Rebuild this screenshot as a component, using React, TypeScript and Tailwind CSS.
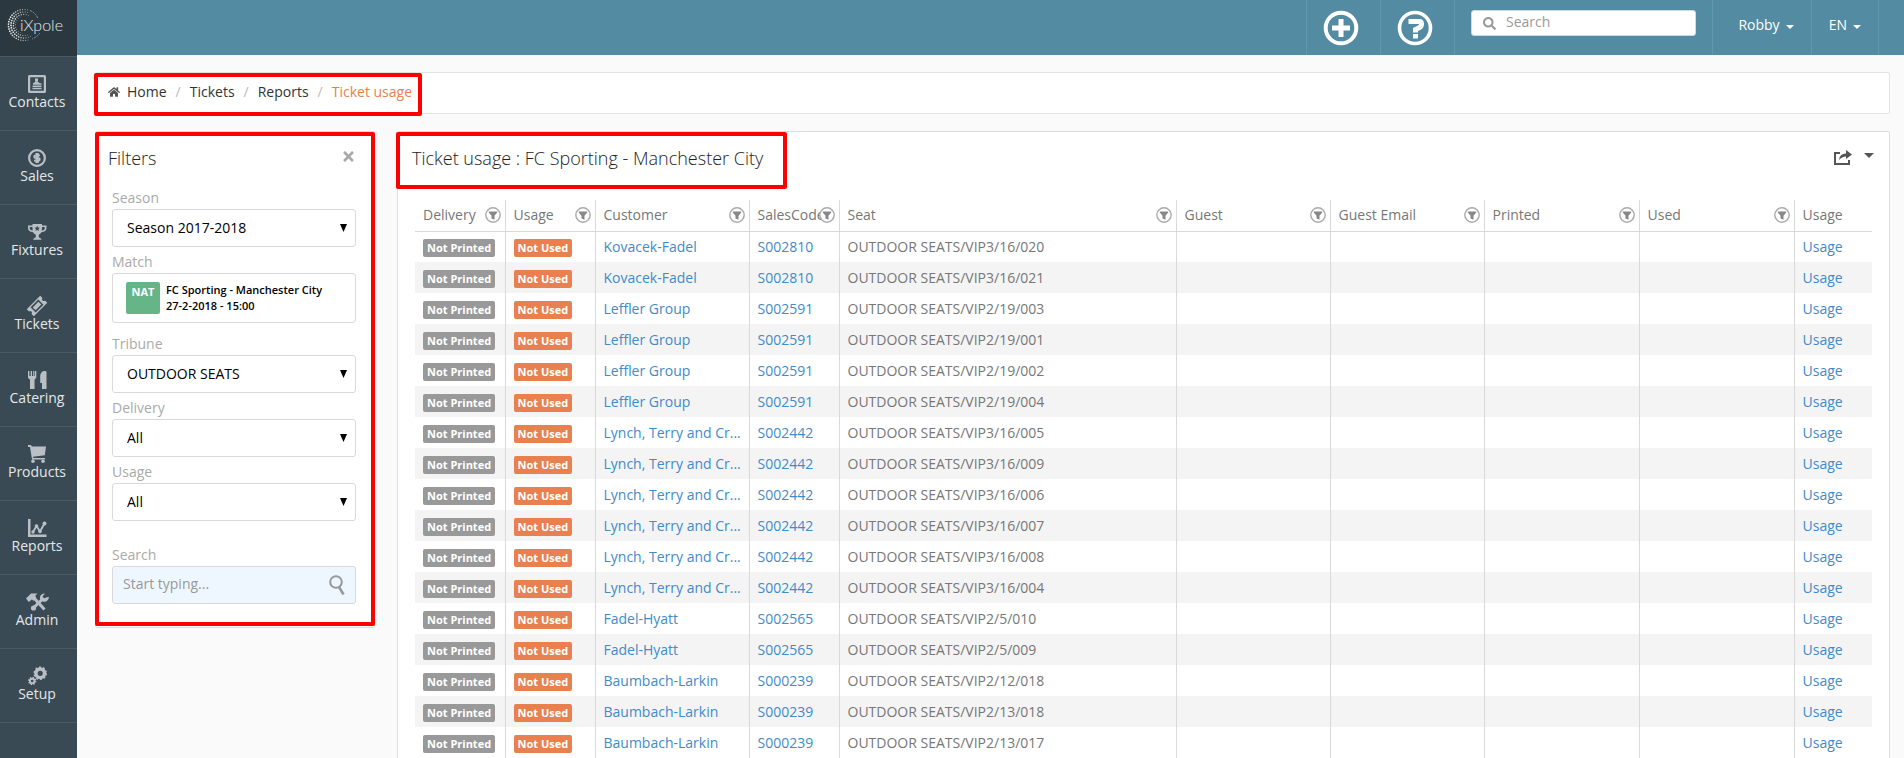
import type { ReactNode } from "react";
import { FaHome, FaSearch, FaTimes } from "react-icons/fa";

const icons: Record<string, ReactNode> = {
  contacts: (
    <>
      <path fillRule="evenodd" d="M1.500 0h15A1.500 1.500 0 0 1 18 1.500v15a1.500 1.500 0 0 1-1.500 1.500h-15A1.500 1.500 0 0 1 0 16.500v-15A1.500 1.500 0 0 1 1.500 0zM2.200 2.200v13.600h13.600V2.200z" />
      <path d="M7 3.500h3v3.300H7zM5 9.700V8.200L7 7h3l2 1.200h1.500v1.500zM4.500 10.500h9V12h-9zM4.500 12.700h9v1.500h-9z" />
    </>
  ),
  sales: (
    <>
      <circle cx="9" cy="9" r="7.900" fill="none" stroke="currentColor" strokeWidth="2.200" />
      <path d="M12 6.300H7.500a1.350 1.350 0 0 0 0 2.700h3a1.350 1.350 0 0 1 0 2.700H6M8.300 4v10M10 4v10" fill="none" stroke="currentColor" strokeWidth="1.700" />
    </>
  ),
  fixtures: (
    <path fillRule="evenodd" d="M4.500 1h9.500v1.500h4.500V5c0 2.500-2 4-5 4.300-.8 1.300-1.700 2-2.700 2.400v2.600l2.500 1.500v1h-8v-1l2.500-1.500v-2.600c-1-.4-2-1.100-2.700-2.400C2 9 0 7.500 0 5V2.500h4.500zM1.700 4v1c0 1.300 1 2.300 2.900 2.700L4.500 4zM16.800 4H14l-.2 3.700C15.800 7.300 16.800 6.300 16.800 5zM9.200 2.800l-.8 1.700-1.900.2 1.400 1.300-.4 1.900L9.200 7l1.700.9-.4-1.900 1.400-1.300-1.900-.2z" />
  ),
  tickets: (
    <g transform="rotate(-45 9 9)">
      <path fillRule="evenodd" d="M-.5 4h19v3.300a1.700 1.700 0 0 0 0 3.400V14h-19v-3.300a1.700 1.700 0 0 0 0-3.400zM3.500 5.400v7.200h11V5.400z" />
      <path d="M5 7h8v4H5z" />
    </g>
  ),
  catering: (
    <path d="M0 0h1.400v5h1.300V0H4v5h1.200V0h1.200v5h.6V0h1.300v6c0 1.300-.8 2-1.800 2.400V18H2V8.400C.8 8 0 7.300 0 6zM18.500 1v17H14v-6h-1.800V5c0-3 2-5 4.300-5 1.200 0 2 .3 2 1z" />
  ),
  products: (
    <>
      <path d="M0 0h3l.8 1.500H18l-1.200 8.700L5 11.700l.4 1.300H17v1.500H4L2 2H0z" />
      <circle cx="5" cy="16.200" r="1.800" />
      <circle cx="15" cy="16.200" r="1.800" />
    </>
  ),
  reports: (
    <>
      <path d="M0 0h2.500v15.500H18.500V18H0z" />
      <path d="M5 13l3.500-6L12 12.500l4.500-8" fill="none" stroke="currentColor" strokeWidth="1.900" />
      <circle cx="5" cy="13" r="1.700" />
      <circle cx="8.500" cy="7" r="1.800" />
      <circle cx="12" cy="12.500" r="1.800" />
      <circle cx="16.500" cy="4.500" r="2" />
    </>
  ),
  admin: (
    <>
      <path d="M-2 5.500L3 .5h6.500L7.200 2.800l1.200 1.900-3 3-1.600-1.200L.8 9z" />
      <path d="M6 5l10.500 11.500" stroke="currentColor" strokeWidth="3" />
      <path d="M5.500 15l9-9" stroke="currentColor" strokeWidth="3" />
      <circle cx="5.500" cy="15" r="2.600" />
      <path d="M17 .5l-2.500 3 1.500 1.700 4.800-1.500c.3 3-2.300 5.300-5.300 5-2.600-.3-4-2.700-3.500-5C12.400 1.700 14.700.2 17 .5z" />
    </>
  ),
  setup: (
    <>
      <circle cx="12.200" cy="6.300" r="4.300" fill="none" stroke="currentColor" strokeWidth="3.400" />
      <circle cx="12.200" cy="6.300" r="6.100" fill="none" stroke="currentColor" strokeWidth="1.400" strokeDasharray="2 1.830" />
      <circle cx="4.200" cy="14" r="2.300" fill="none" stroke="currentColor" strokeWidth="2" />
      <circle cx="4.200" cy="14" r="3.600" fill="none" stroke="currentColor" strokeWidth="1.200" strokeDasharray="1.400 1.430" />
    </>
  ),
};

const nav = [
  ["Contacts", "contacts"],
  ["Sales", "sales"],
  ["Fixtures", "fixtures"],
  ["Tickets", "tickets"],
  ["Catering", "catering"],
  ["Products", "products"],
  ["Reports", "reports"],
  ["Admin", "admin"],
  ["Setup", "setup"],
];

const columns = [
  ["Delivery", "w-[90px]"],
  ["Usage", "w-[90px]"],
  ["Customer", "w-[154px]"],
  ["SalesCode", "w-[90px]"],
  ["Seat", ""],
  ["Guest", "w-[154px]"],
  ["Guest Email", "w-[154px]"],
  ["Printed", "w-[155px]"],
  ["Used", "w-[155px]"],
];

const tickets = [
  ["Kovacek-Fadel", "S002810", "VIP3/16/020"],
  ["Kovacek-Fadel", "S002810", "VIP3/16/021"],
  ["Leffler Group", "S002591", "VIP2/19/003"],
  ["Leffler Group", "S002591", "VIP2/19/001"],
  ["Leffler Group", "S002591", "VIP2/19/002"],
  ["Leffler Group", "S002591", "VIP2/19/004"],
  ["Lynch, Terry and Cr...", "S002442", "VIP3/16/005"],
  ["Lynch, Terry and Cr...", "S002442", "VIP3/16/009"],
  ["Lynch, Terry and Cr...", "S002442", "VIP3/16/006"],
  ["Lynch, Terry and Cr...", "S002442", "VIP3/16/007"],
  ["Lynch, Terry and Cr...", "S002442", "VIP3/16/008"],
  ["Lynch, Terry and Cr...", "S002442", "VIP3/16/004"],
  ["Fadel-Hyatt", "S002565", "VIP2/5/010"],
  ["Fadel-Hyatt", "S002565", "VIP2/5/009"],
  ["Baumbach-Larkin", "S000239", "VIP2/12/018"],
  ["Baumbach-Larkin", "S000239", "VIP2/13/018"],
  ["Baumbach-Larkin", "S000239", "VIP2/13/017"],
];

// rings of the logo: radius, dot size, first and last angle in degrees
const rings = [
  [15.5, 0.9, 75, 300],
  [13, 0.9, 60, 305],
  [10.6, 0.8, 70, 310],
  [8.6, 0.5, 100, 270],
];

export default function App() {
  return (
    <div className="flex h-screen overflow-hidden bg-[#fafafa] font-['Open_Sans',sans-serif] text-sm text-[#777]">
      <Sidebar />
      <div className="flex min-w-0 flex-1 flex-col">
        <TopBar />
        <main className="flex min-h-0 flex-1 flex-col pt-[17px] pr-[14px] pl-[18px]">
          <Breadcrumb />
          <div className="mt-[17px] flex min-h-0 flex-1 items-start gap-[22px]">
            <Filters />
            <TicketUsage />
          </div>
        </main>
      </div>
    </div>
  );
}

/* Red marker frame drawn over a part of the page */
function Marker({ className }: { className: string }) {
  return (
    <div
      aria-hidden="true"
      className={`pointer-events-none absolute rounded-xs border-4 border-[#ff0000] ${className}`}
    />
  );
}

function Sidebar() {
  return (
    <nav className="w-[77px] shrink-0 bg-[#3a4a54]" aria-label="Main">
      <a href="#" aria-label="iXpole" className="block h-14 bg-[#2c3840] pt-[7px] pl-[6px]">
        <Logo />
      </a>
      {nav.map(([label, icon]) => (
        <a
          key={label}
          href="#"
          className="flex h-[74px] flex-col items-center border-t border-[#4b5a64] pt-[18px] pr-[3px] text-[#e4e7e9] last:h-[75px] last:border-b"
        >
          <svg width="18" height="18" viewBox="0 0 18 18" fill="currentColor" className="shrink-0 overflow-visible text-[#b9bfc4]" aria-hidden="true">
            {icons[icon]}
          </svg>
          <span className="leading-[18px]">{label}</span>
        </a>
      ))}
    </nav>
  );
}

function Logo() {
  const dots = rings.flatMap(([radius, size, from, to], ring) => {
    const step = 140 / radius;
    const count = Math.floor((to - from) / step);
    return Array.from({ length: count }, (_, i) => {
      const angle = ((from + i * step) * Math.PI) / 180;
      // dots fade out towards both ends of the crescent
      const edge = Math.sin(((i + 0.5) / count) * Math.PI);
      return (
        <circle
          key={`${ring}-${i}`}
          cx={18 + radius * Math.cos(angle)}
          cy={18 + radius * Math.sin(angle)}
          r={size * (0.6 + 0.4 * edge)}
          opacity={0.5 + 0.5 * edge}
        />
      );
    });
  });

  return (
    <svg width="60" height="36" viewBox="0 0 60 36" fill="#e4e7e9" aria-hidden="true">
      {dots}
      <path d="M24 3.500Q30 6 32 12M34 26Q31 30 26 32" fill="none" stroke="#8d979e" strokeWidth="1" strokeDasharray="2 1" />
      <text x="14" y="24" fontSize="16" fontFamily="Lato" fontWeight="300">
        iXpole
      </text>
    </svg>
  );
}

function TopBar() {
  return (
    <header className="flex h-[55px] shrink-0 justify-end bg-[#528ba2] pr-[25px] text-white">
      <button type="button" aria-label="Add" className="flex w-[74px] items-center justify-center border-l border-[#6397ac] pr-[6px]">
        <svg width="36" height="36" viewBox="0 0 36 36" fill="none" stroke="currentColor" aria-hidden="true">
          <circle cx="18" cy="18" r="15.300" strokeWidth="4" />
          <path d="M18 9v18M9 18h18" strokeWidth="5" />
        </svg>
      </button>
      <button type="button" aria-label="Help" className="flex w-[74px] items-center justify-center border-l border-[#6397ac] pr-[6px]">
        <svg width="36" height="36" viewBox="0 0 36 36" fill="none" stroke="currentColor" aria-hidden="true">
          <circle cx="18" cy="18" r="15.500" strokeWidth="3.600" />
          <path d="M11.500 11.500h11q2 0 2 2.500t-2 3.500l-4 2v3" strokeWidth="5" />
          <path d="M18.500 24v4.500" strokeWidth="5" />
        </svg>
      </button>
      <div className="border-l border-[#6397ac] pt-[10px] pr-4 pl-4">
        <label className="flex h-[26px] w-[225px] items-center rounded-[3px] border border-[#c9dbe3] bg-white pl-[11px]">
          <FaSearch className="size-[13px] text-[#999]" aria-hidden="true" />
          <input type="search" aria-label="Search" placeholder="Search" className="ml-[10px] w-40 pb-[2px] text-sm text-[#555] outline-none placeholder:text-[#999]" />
        </label>
      </div>
      <button type="button" className="flex w-[99px] items-center justify-center gap-[6px] border-l border-[#6397ac] pl-2 pb-[6px]">
        Robby <Caret />
      </button>
      <button type="button" className="flex w-[68px] items-center justify-center gap-[6px] border-x border-[#6397ac] pb-[6px]">
        EN <Caret />
      </button>
    </header>
  );
}

function Caret() {
  return <span aria-hidden="true" className="mt-1 border-x-4 border-t-4 border-x-transparent border-t-current" />;
}

function Breadcrumb() {
  return (
    <nav aria-label="Breadcrumb" className="relative flex h-[42px] shrink-0 items-center rounded-xs border border-[#e3e3e3] bg-white pb-[3px] pl-3 font-medium text-[#333]">
      <FaHome className="size-3 text-[#555]" aria-hidden="true" />
      <a href="#" className="ml-[7px]">Home</a>
      <span className="px-[9px] font-normal text-[#bbb]">/</span>
      <a href="#">Tickets</a>
      <span className="px-[9px] font-normal text-[#bbb]">/</span>
      <a href="#">Reports</a>
      <span className="px-[9px] font-normal text-[#bbb]">/</span>
      <span className="text-[#e8814f]">Ticket usage</span>
      <Marker className="-left-[2px] top-0 h-[43px] w-[328px]" />
    </nav>
  );
}

function Select({ id, label, value }: { id: string; label: string; value: string }) {
  return (
    <div>
      <label htmlFor={id} className="block h-[26px] pt-[5px] leading-5 text-[#aaa]">
        {label}
      </label>
      <div className="relative">
        <select id={id} className="block h-[38px] w-full appearance-none rounded-[3px] border border-[#d9d9d9] bg-white px-[14px] text-black">
          <option>{value}</option>
        </select>
        <svg width="7" height="8" viewBox="0 0 7 8" className="pointer-events-none absolute top-[15px] right-[9px]" aria-hidden="true">
          <path d="M0 0h7L3.500 8z" />
        </svg>
      </div>
    </div>
  );
}

function Filters() {
  return (
    <aside className="relative h-[497px] w-[280px] shrink-0 rounded-xs border border-[#ddd] bg-white pt-[14px] pr-[18px] pl-4">
      <div className="flex items-start justify-between">
        <h2 className="-ml-1 text-lg leading-6 font-light text-[#222]">Filters</h2>
        <button type="button" aria-label="Close filters" className="pt-[3px] text-[#aaa]">
          <FaTimes className="size-[15px]" />
        </button>
      </div>
      <form className="mt-[13px]">
        <Select id="season" label="Season" value="Season 2017-2018" />
        <div>
          <span id="match-label" className="block h-[26px] pt-[5px] leading-5 text-[#aaa]">
            Match
          </span>
          <button type="button" aria-labelledby="match-label" className="flex h-[50px] w-full items-center gap-[6px] rounded-[3px] border border-[#d9d9d9] px-[13px] text-left text-[11px] leading-4 font-semibold text-black">
            <span className="h-8 w-[34px] rounded-xs bg-[#66b588] pt-[2px] text-center font-bold text-white">NAT</span>
            <span>
              FC Sporting - Manchester City
              <br />
              27-2-2018 - 15:00
            </span>
          </button>
        </div>
        <div className="mt-[6px]">
          <Select id="tribune" label="Tribune" value="OUTDOOR SEATS" />
        </div>
        <Select id="delivery" label="Delivery" value="All" />
        <Select id="usage" label="Usage" value="All" />
        <div className="relative mt-[19px]">
          <label htmlFor="filter-search" className="block h-[26px] pt-[5px] leading-5 text-[#aaa]">
            Search
          </label>
          <input id="filter-search" type="text" placeholder="Start typing..." className="block h-[38px] w-full rounded-[3px] border border-[#d9d9d9] bg-[#eef7ff] px-[10px] pb-[3px] placeholder:text-[#999]" />
          <svg width="16" height="20" viewBox="0 0 16 20" fill="none" stroke="#999" className="absolute right-[11px] bottom-[9px]" aria-hidden="true">
            <circle cx="7" cy="7" r="5.800" strokeWidth="2" />
            <path d="M10 12l4.500 7.500" strokeWidth="2.600" />
          </svg>
        </div>
      </form>
      <Marker className="-inset-x-px top-0 bottom-px" />
    </aside>
  );
}

function FilterIcon() {
  return (
    <svg width="16" height="16" viewBox="0 0 16 16" className="block" aria-hidden="true">
      <circle cx="8" cy="8" r="7.200" fill="#fff" stroke="#aaa" strokeWidth="1.400" />
      <path d="M3.800 4.500h8.400v1L9.500 8.700v4l-3-1.200V8.700L3.800 5.500z" fill="#888" />
    </svg>
  );
}

function TicketUsage() {
  return (
    <section className="relative min-w-0 flex-1 self-stretch rounded-t-xs border border-b-0 border-[#ddd] bg-white">
      <div className="flex h-[68px] items-start justify-between pt-[14px] pr-[15px] pl-[14px]">
        <h1 className="text-lg leading-6 font-light text-[#222]">Ticket usage : FC Sporting - Manchester City</h1>
        <button type="button" aria-label="Export" className="flex items-center gap-3 pt-1 text-[#555]">
          <svg width="18" height="15" viewBox="0 0 18 15" aria-hidden="true">
            <path d="M6 3H1v11h14v-4" fill="none" stroke="currentColor" strokeWidth="2" />
            <path d="M5 10q.5-6.500 7-6.500V0L18 4.500 12 9V6.500Q8 6.500 5 10z" fill="currentColor" />
          </svg>
          <span aria-hidden="true" className="mb-1 border-x-[5px] border-t-[5px] border-x-transparent border-t-current" />
        </button>
      </div>
      <div className="px-[17px]">
        <table className="w-full table-fixed border-collapse text-left">
          <thead>
            <tr className="h-[31px] border-b border-[#d9d9d9]">
              {columns.map(([label, width]) => (
                <th key={label} scope="col" className={`relative border-r border-[#d9d9d9] p-0 pl-2 font-normal whitespace-nowrap ${width}`}>
                  {label}
                  <button type="button" aria-label={`Filter ${label}`} className="absolute top-[7px] right-1">
                    <FilterIcon />
                  </button>
                </th>
              ))}
              <th scope="col" className="w-[78px] p-0 pl-2 font-normal">Usage</th>
            </tr>
          </thead>
          <tbody>
            {tickets.map(([customer, code, seat]) => (
              <tr key={seat} className="h-[31px] even:bg-[#f4f4f4]">
                <Cell><Tag className="bg-[#999]">Not Printed</Tag></Cell>
                <Cell><Tag className="bg-[#e8814f]">Not Used</Tag></Cell>
                <Cell><a href="#" className="text-[#428bca]">{customer}</a></Cell>
                <Cell><a href="#" className="text-[#428bca]">{code}</a></Cell>
                <Cell>OUTDOOR SEATS/{seat}</Cell>
                <Cell />
                <Cell />
                <Cell />
                <Cell />
                <td className="p-0 pl-2"><a href="#" className="text-[#428bca]">Usage</a></td>
              </tr>
            ))}
          </tbody>
        </table>
      </div>
      <Marker className="-left-[2px] top-0 h-[57px] w-[391px]" />
    </section>
  );
}

function Cell({ children }: { children?: ReactNode }) {
  return <td className="border-r border-[#d9d9d9] py-0 pr-1 pl-2 whitespace-nowrap">{children}</td>;
}

function Tag({ className, children }: { className: string; children: ReactNode }) {
  return (
    <span className={`mt-[2px] block h-[18px] w-fit rounded-xs px-1 text-[11px] leading-[18px] font-bold text-white ${className}`}>
      {children}
    </span>
  );
}
